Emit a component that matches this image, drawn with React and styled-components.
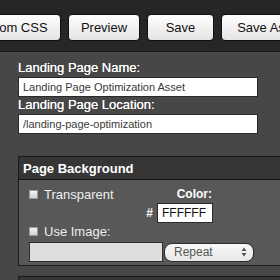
import React from "react";
import styled, { createGlobalStyle } from "styled-components";

const GlobalStyle = createGlobalStyle`
  html, body {
    margin: 0;
    padding: 0;
    background: #474747;
    font-family: "Liberation Sans", Arial, sans-serif;
    overflow: hidden;
  }
`;

const Page = styled.div`
  width: 280px;
  height: 280px;
  overflow: hidden;
  background: #474747;
`;

const Toolbar = styled.div`
  height: 52px;
  background: #262626;
  border-bottom: 1px solid #1c1c1c;
  box-sizing: border-box;
  display: flex;
  align-items: flex-start;
  gap: 7px;
  padding-top: 14px;
  margin-left: -41px;
`;

const ToolButton = styled.button`
  flex-shrink: 0;
  box-sizing: border-box;
  height: 27px;
  width: ${(p) => p.$w}px;
  padding: 0;
  border: 1px solid #101010;
  border-radius: 4px;
  background: linear-gradient(#ffffff, #e4e4e4);
  color: #111;
  font-family: "Liberation Sans", Arial, sans-serif;
  font-size: 13px;
  white-space: nowrap;
`;

const Content = styled.div`
  padding: 8px 22px 0 18px;
`;

const Label = styled.div`
  color: #fff;
  font-size: 13px;
  line-height: 15px;
  text-shadow: 0 0 0.4px #fff;
`;

const TextInput = styled.div`
  box-sizing: border-box;
  height: 20px;
  margin-top: 2px;
  padding: 0 4px;
  background: #fff;
  border: 1px solid #2a2a2a;
  color: #3a3a3a;
  font-size: 11px;
  line-height: 18px;
  white-space: nowrap;
  overflow: hidden;
`;

const Panel = styled.div`
  margin-top: ${(p) => p.$top}px;
  margin-right: -60px;
  border: 1px solid #1a1a1a;
  background: #585858;
`;

const PanelHeader = styled.div`
  height: 23px;
  box-sizing: border-box;
  padding: 4px 4px 0;
  background: #363636;
  border-bottom: 1px solid #161616;
  color: #fff;
  font-weight: bold;
  font-size: 13px;
  line-height: 15px;
`;

const PanelBody = styled.div`
  padding: 7px 0 3px 10px;
`;

const TopRow = styled.div`
  display: flex;
  align-items: flex-start;
`;

const CheckRow = styled.label`
  display: flex;
  align-items: center;
  gap: 6px;
  width: ${(p) => p.$width || "auto"};
  color: #eee;
  font-size: 13px;
  line-height: 15px;
`;

const Box = styled.span`
  width: 9px;
  height: 9px;
  box-sizing: border-box;
  background: linear-gradient(#f2f2f2, #d4d4d4);
  border: 1px solid #9a9a9a;
`;

const ColorGroup = styled.div`
  display: flex;
  flex-direction: column;
  align-items: flex-end;
  width: 65px;
`;

const ColorLabel = styled.div`
  color: #fff;
  font-size: 12px;
  line-height: 15px;
  font-weight: bold;
  margin-right: 1px;
`;

const ColorRow = styled.div`
  display: flex;
  align-items: center;
  gap: 4px;
  margin-top: 1px;
`;

const Hash = styled.span`
  color: #fff;
  font-size: 12px;
  font-weight: bold;
`;

const ColorInput = styled(TextInput)`
  width: 56px;
  margin-top: 0;
  color: #111;
  font-size: 12px;
`;

const UseImageRow = styled.div`
  margin-top: 1px;
`;

const ImageRow = styled.div`
  display: flex;
  align-items: center;
  gap: 1px;
  margin-top: 3px;
`;

const ImageInput = styled.div`
  box-sizing: border-box;
  width: 134px;
  height: 20px;
  background: #dedede;
  border: 1px solid #2e2e2e;
`;

const Select = styled.div`
  box-sizing: border-box;
  width: 90px;
  height: 19px;
  border: 1px solid #2e2e2e;
  border-radius: 8px;
  background: linear-gradient(#f8f8f8, #e8e8e8);
  display: flex;
  align-items: center;
  justify-content: space-between;
  padding: 0 6px 0 9px;
  color: #555;
  font-size: 12px;
`;

const Arrows = () => (
  <svg width="6" height="10" viewBox="0 0 6 10">
    <path d="M3 0.5 L5.5 4 H0.5 Z" fill="#555" />
    <path d="M3 9.5 L5.5 6 H0.5 Z" fill="#555" />
  </svg>
);

export default function App() {
  return (
    <Page>
      <GlobalStyle />
      <Toolbar>
        <ToolButton $w={102}>Custom CSS</ToolButton>
        <ToolButton $w={72}>Preview</ToolButton>
        <ToolButton $w={67}>Save</ToolButton>
        <ToolButton $w={80}>Save As</ToolButton>
      </Toolbar>
      <Content>
        <Label>Landing Page Name:</Label>
        <TextInput>Landing Page Optimization Asset</TextInput>
        <Label>Landing Page Location:</Label>
        <TextInput>/landing-page-optimization</TextInput>
        <Panel $top={22}>
          <PanelHeader>Page Background</PanelHeader>
          <PanelBody>
            <TopRow>
              <CheckRow $width="119px">
                <Box />
                Transparent
              </CheckRow>
              <ColorGroup>
                <ColorLabel>Color:</ColorLabel>
                <ColorRow>
                  <Hash>#</Hash>
                  <ColorInput>FFFFFF</ColorInput>
                </ColorRow>
              </ColorGroup>
            </TopRow>
            <UseImageRow>
              <CheckRow>
                <Box />
                Use Image:
              </CheckRow>
            </UseImageRow>
            <ImageRow>
              <ImageInput />
              <Select>
                Repeat
                <Arrows />
              </Select>
            </ImageRow>
          </PanelBody>
        </Panel>
        <Panel $top={10}>
          <PanelHeader />
        </Panel>
      </Content>
    </Page>
  );
}
